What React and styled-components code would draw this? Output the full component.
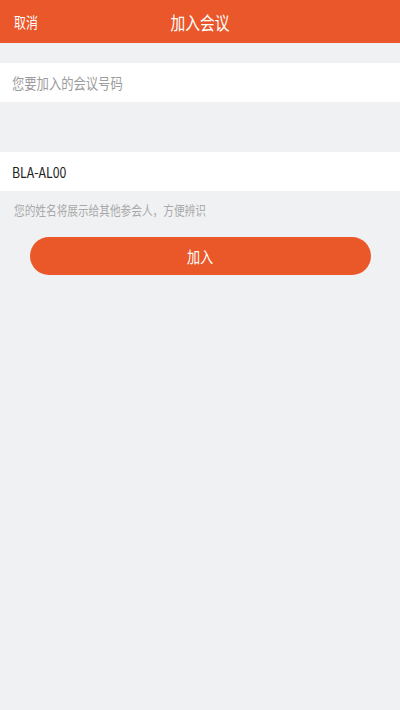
import React from 'react';
import styled, { createGlobalStyle } from 'styled-components';

const GlobalStyle = createGlobalStyle`
  html, body {
    margin: 0;
    padding: 0;
    background: #f0f1f3;
    font-family: "Noto Sans CJK SC", "Noto Sans", sans-serif;
  }
  #root {
    min-height: 710px;
  }
`;

// the device font is a narrow one, so glyphs get squeezed sideways
const Narrow = styled.span`
  display: inline-block;
  white-space: nowrap;
  transform: scaleX(0.82);
  transform-origin: ${p => p.$origin || 'left'} center;
`;

const Page = styled.div`
  min-height: 710px;
  background: #f0f1f3;
  display: flex;
  flex-direction: column;
`;

const Header = styled.header`
  height: 43px;
  background: #e9572a;
  display: grid;
  grid-template-columns: 1fr auto 1fr;
  align-items: center;
  padding: 0 14px;
  color: #fff;
`;

const CancelButton = styled.span`
  font-size: 14.5px;
  justify-self: start;
`;

const Title = styled.h1`
  margin: 0;
  font-size: 18px;
  font-weight: 400;
`;

const Field = styled.div`
  height: 39px;
  background: #fff;
  margin-top: ${p => p.$gap}px;
  display: flex;
  align-items: center;
  padding: 0 12px;
  font-size: 15px;
  color: ${p => (p.$placeholder ? '#9c9c9c' : '#222')};
`;

const Hint = styled.p`
  margin: 10px 14px 0;
  font-size: 13px;
  line-height: 18px;
  height: 18px;
  color: #a9a9a9;
`;

const JoinButton = styled.button`
  margin: 18px 29px 0 30px;
  height: 38px;
  border: none;
  border-radius: 19px;
  background: #ea582a;
  color: #fff;
  font-family: inherit;
  font-size: 16px;
  padding: 0;
`;

export default function App() {
  return (
    <>
      <GlobalStyle />
      <Page>
        <Header>
          <CancelButton><Narrow>取消</Narrow></CancelButton>
          <Title><Narrow $origin="center">加入会议</Narrow></Title>
          <span />
        </Header>
        <Field $gap={20} $placeholder><Narrow>您要加入的会议号码</Narrow></Field>
        <Field $gap={50}><Narrow>BLA-AL00</Narrow></Field>
        <Hint><Narrow>您的姓名将展示给其他参会人，方便辨识</Narrow></Hint>
        <JoinButton><Narrow $origin="center">加入</Narrow></JoinButton>
      </Page>
    </>
  );
}
